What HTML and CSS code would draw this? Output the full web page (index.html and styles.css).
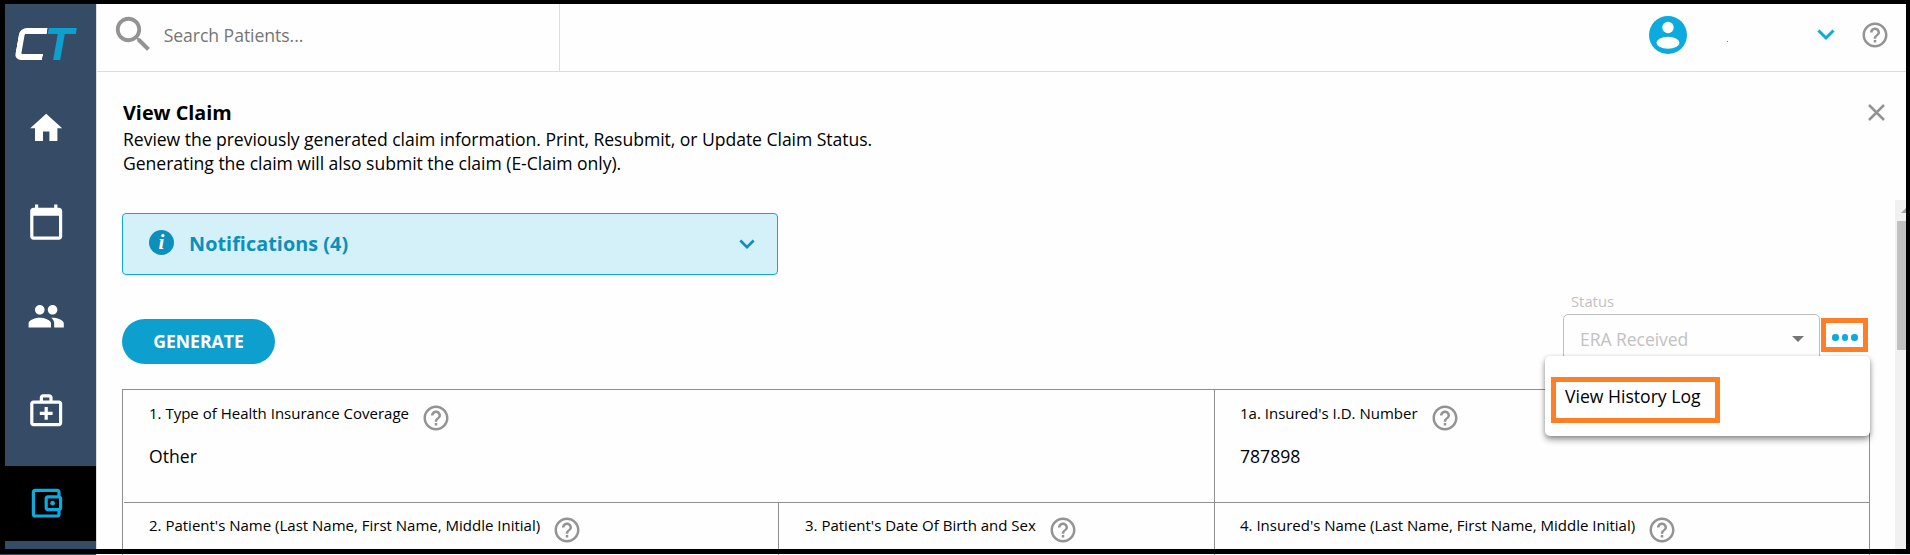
FILE: index.html
```
<!DOCTYPE html>
<html lang="en">
<head>
<meta charset="utf-8">
<title>View Claim</title>
<link rel="stylesheet" href="styles.css">
</head>
<body>
<svg class="defs" width="0" height="0" aria-hidden="true">
  <symbol id="help" viewBox="0 0 24 24"><path d="M11 18h2v-2h-2v2zm1-16C6.48 2 2 6.48 2 12s4.48 10 10 10 10-4.48 10-10S17.52 2 12 2zm0 18c-4.41 0-8-3.59-8-8s3.59-8 8-8 8 3.59 8 8-3.59 8-8 8zm0-14c-2.21 0-4 1.79-4 4h2c0-1.1.9-2 2-2s2 .9 2 2c0 2-3 1.75-3 5h2c0-2.25 3-2.5 3-5 0-2.21-1.79-4-4-4z"/></symbol>
</svg>
<div class="app">
  <nav class="sidebar">
    <div class="logo"><span class="logo-c"></span><span class="logo-t"></span></div>
    <a class="nav-item"><svg viewBox="0 0 24 24"><path d="M10 20v-6h4v6h5v-8h3L12 3 2 12h3v8z"/></svg></a>
    <a class="nav-item"><svg viewBox="0 0 24 24"><path d="M20 3h-1V1h-2v2H7V1H5v2H4c-1.1 0-2 .9-2 2v16c0 1.1.9 2 2 2h16c1.1 0 2-.9 2-2V5c0-1.1-.9-2-2-2zm0 18H4V8h16v13z"/></svg></a>
    <a class="nav-item"><svg viewBox="0 0 24 24"><path d="M16 11c1.66 0 2.99-1.34 2.99-3S17.66 5 16 5c-1.66 0-3 1.34-3 3s1.34 3 3 3zm-8 0c1.66 0 2.99-1.34 2.99-3S9.66 5 8 5C6.34 5 5 6.34 5 8s1.34 3 3 3zm0 2c-2.33 0-7 1.17-7 3.5V19h14v-2.500c0-2.330-4.670-3.500-7-3.500zm8 0c-.29 0-.62.02-.97.05 1.160.840 1.970 1.970 1.970 3.450V19h6v-2.500c0-2.330-4.670-3.500-7-3.500z"/></svg></a>
    <a class="nav-item"><svg viewBox="0 0 24 24"><path fill-rule="evenodd" d="M20 6h-4V4c0-1.100-.9-2-2-2h-4c-1.100 0-2 .9-2 2v2H4c-1.100 0-2 .9-2 2v12c0 1.100.9 2 2 2h16c1.100 0 2-.9 2-2V8c0-1.100-.9-2-2-2zM10 4h4v2h-4V4zm10 16H4V8h16v12z"/><path d="M13 10h-2v3H8v2h3v3h2v-3h3v-2h-3z"/></svg></a>
    <a class="nav-item active"><svg viewBox="0 0 24 24"><path fill-rule="evenodd" d="M21 7.280V5c0-1.100-.9-2-2-2H5c-1.110 0-2 .9-2 2v14c0 1.100.890 2 2 2h14c1.100 0 2-.9 2-2v-2.280c.590-.350 1-.980 1-1.720V9c0-.740-.410-1.370-1-1.720zM20 9v6h-7V9h7zM5 19V5h14v2h-6c-1.100 0-2 .9-2 2v6c0 1.100.9 2 2 2h6v2H5z"/><circle cx="16" cy="12" r="1.500"/></svg></a>
  </nav>
  <main class="main">
    <header class="topbar">
      <div class="search">
        <svg class="search-icon" viewBox="0 0 24 24"><path d="M15.500 14h-.790l-.280-.270C15.410 12.590 16 11.110 16 9.500 16 5.910 13.090 3 9.500 3S3 5.910 3 9.500 5.910 16 9.500 16c1.610 0 3.090-.590 4.230-1.570l.270.280v.790l5 4.990L20.490 19l-4.990-5zm-6 0C7.010 14 5 11.990 5 9.500S7.010 5 9.500 5 14 7.010 14 9.500 11.990 14 9.500 14z"/></svg>
        <span class="search-text">Search Patients...</span>
      </div>
      <div class="account">
        <svg class="avatar" viewBox="0 0 38 38"><circle cx="19" cy="19" r="19"/><circle class="hole" cx="19" cy="11.500" r="5.700"/><ellipse class="hole" cx="19" cy="26.800" rx="11.500" ry="6"/></svg>
        <span class="dot"></span>
        <svg class="chevron blue" viewBox="0 0 18 12"><path d="M1.500 1.500 9 9l7.500-7.500"/></svg>
        <svg class="help"><use href="#help"/></svg>
      </div>
    </header>
    <section class="heading">
      <div>
        <h1>View Claim</h1>
        <p>Review the previously generated claim information. Print, Resubmit, or Update Claim Status.<br>Generating the claim will also submit the claim (E-Claim only).</p>
      </div>
      <svg class="close" viewBox="0 0 17 17"><path d="M1 1l15 15M16 1 1 16"/></svg>
    </section>
    <div class="scroll-area">
      <div class="content">
        <div class="notice">
          <span class="info">i</span>
          <span class="notice-text">Notifications (4)</span>
          <svg class="chevron" viewBox="0 0 18 12"><path d="M1.500 1.500 9 9l7.500-7.500"/></svg>
        </div>
        <div class="actions">
          <button class="generate">GENERATE</button>
          <div class="status">
            <label class="status-label">Status</label>
            <div class="status-row">
              <div class="select"><span>ERA Received</span><i class="caret"></i></div>
              <div class="more"><i></i><i></i><i></i></div>
            </div>
            <div class="menu"><div class="menu-item">View History Log</div></div>
          </div>
        </div>
        <div class="form">
          <div class="row">
            <div class="cell wide"><div class="label"><span>1. Type of Health Insurance Coverage</span><svg class="help"><use href="#help"/></svg></div><div class="value">Other</div></div>
            <div class="cell last"><div class="label"><span>1a. Insured's I.D. Number</span><svg class="help"><use href="#help"/></svg></div><div class="value">787898</div></div>
          </div>
          <div class="row">
            <div class="cell name"><div class="label"><span>2. Patient's Name (Last Name, First Name, Middle Initial)</span><svg class="help"><use href="#help"/></svg></div></div>
            <div class="cell birth"><div class="label"><span>3. Patient's Date Of Birth and Sex</span><svg class="help"><use href="#help"/></svg></div></div>
            <div class="cell last"><div class="label"><span>4. Insured's Name (Last Name, First Name, Middle Initial)</span><svg class="help"><use href="#help"/></svg></div></div>
          </div>
        </div>
      </div>
      <div class="scrollbar"><i class="up"></i><i class="thumb"></i></div>
    </div>
  </main>
  <div class="frame"></div>
</div>
</body>
</html>
```
FILE: styles.css
```
* { box-sizing: border-box; }
body {
  margin: 0;
  overflow: hidden;
  background: #fefefe;
  color: #000;
  font: 17.6px/24px "Open Sans", sans-serif;
}
svg { display: block; flex: none; fill: currentColor; }
.defs { position: absolute; }
.app { position: relative; display: flex; width: 1910px; height: 555px; overflow: hidden; white-space: nowrap; }

/* black outline drawn over the window */
.frame { position: absolute; inset: 0 0 1px 0; border: solid #000; border-width: 4px 4px 5px 5px; }

.sidebar {
  display: flex; flex-direction: column; gap: 19px;
  width: 97px; flex: none;
  background: #364c66; border-right: 1px solid #ddd; color: #fff;
}
.logo { display: flex; height: 71px; padding: 28px 0 0 17px; }
.logo-c { width: 28px; height: 32px; border: solid #fff; border-width: 6px 0 6px 6px; border-radius: 7px 0 0 7px; transform: skewX(-10deg); }
.logo-t {
  width: 28px; height: 32px; margin-left: 1px; transform: skewX(-10deg);
  background: linear-gradient(#0d9fce, #0d9fce) 0 0 / 28px 6px no-repeat, linear-gradient(#0d9fce, #0d9fce) 10px 0 / 7px 32px no-repeat;
}
.nav-item { display: flex; align-items: center; justify-content: center; height: 75px; flex: none; padding: 1px 4px 0 0; }
.nav-item svg { width: 38.4px; height: 38.4px; }
.nav-item.active { background: #000; color: #0daade; padding-top: 0; }

.main { display: flex; flex-direction: column; flex: 1; min-width: 0; }
.topbar { display: flex; justify-content: space-between; height: 72px; flex: none; border-bottom: 1px solid #ddd; }
.search { display: flex; width: 463px; padding: 11px 0 0 13px; border-right: 1px solid #ddd; }
.search-icon { width: 46.7px; height: 46.7px; color: #939393; }
.search-text { margin: 12px 0 0 7px; color: #757575; letter-spacing: -0.05px; }
.account { display: flex; align-items: center; padding: 0 20px 2px 0; color: #0daade; }
.avatar { width: 38px; height: 38px; }
.avatar .hole { fill: #fefefe; }
.dot { width: 1px; height: 1px; margin: 14px 89px 0 40px; background: #0daade; }
.chevron { width: 18px; height: 12px; fill: none; stroke: currentColor; stroke-width: 3; }
.account .chevron { margin-right: 25px; }
.help { width: 30px; height: 30px; color: #939393; }

.heading { display: flex; justify-content: space-between; height: 128px; flex: none; padding: 28px 25px 0 26px; }
h1 { margin: 0 0 2px; font-size: 19.8px; line-height: 25px; font-weight: 700; }
p { margin: 0; line-height: 24.4px; letter-spacing: -0.05px; }
.close { width: 17px; height: 17px; margin-top: 4px; fill: none; stroke: #939393; stroke-width: 2.5; }

.scroll-area { display: flex; flex: 1; min-height: 0; }
.content { width: 1773px; padding: 13px 0 0 25px; }
.scrollbar { flex: 1; margin-left: 25px; padding: 8px 0 0 2px; background: #f1f1f1; }
.scrollbar .up { display: block; margin-left: 4px; width: 0; border: solid transparent; border-width: 0 5px 5px; border-bottom-color: #a3a3a3; }
.scrollbar .thumb { display: block; width: 15px; height: 129px; margin-top: 8px; background: #c1c1c1; }

.notice {
  display: flex; align-items: center; width: 656px; height: 62px; padding: 0 22px 0 26px;
  background: #d4f0f8; border: 1px solid #0daade; border-radius: 4px; color: #0d8fbb;
}
.info {
  width: 25px; height: 25px; margin-bottom: 3px; border-radius: 50%;
  background: #0d8fbb; color: #fff; text-align: center;
  font: italic bold 21px/24px "Liberation Serif", serif;
}
.notice-text { margin: 0 auto 0 15px; font-size: 19.8px; font-weight: 700; letter-spacing: 0.05px; }
.notice .chevron { width: 16px; height: 11px; }

.actions { display: flex; justify-content: space-between; height: 114px; padding-top: 17px; }
.generate {
  width: 153px; height: 45px; margin-top: 27px; padding: 0 0 1px; border: 0; border-radius: 23px;
  background: #0d9fce; color: #fff; font: 700 17.6px/44px "Open Sans", sans-serif;
}
.status { position: relative; width: 307px; }
.status-label { display: block; margin-left: 8px; height: 22px; font-size: 14.8px; line-height: 19px; color: #c2c2c2; }
.status-row { display: flex; gap: 1px; }
.select {
  display: flex; align-items: center; justify-content: space-between; width: 257px; height: 50px; padding: 0 15px 0 16px;
  border: 1px solid #bdbdbd; border-radius: 5px; color: #c2c2c2; letter-spacing: -0.08px;
}
.caret { border: solid transparent; border-width: 6px 6.5px 0; border-top-color: #757575; }
.more { display: flex; align-items: center; justify-content: center; gap: 3px; width: 47px; height: 34px; margin-top: 4px; border: 5px solid #ff7f27; padding: 5px 0 0 1px; }
.more i { width: 6.5px; height: 6.5px; background: #0daade; border-radius: 50%; }
.menu {
  position: absolute; left: -18px; top: 64px; z-index: 1; width: 325px; height: 80px; padding: 21px 6px;
  background: #fff; border-radius: 5px; box-shadow: 0 4px 6px rgba(0,0,0,.35), 0 1px 4px rgba(0,0,0,.2);
}
.menu-item { width: 169px; height: 46px; border: 5px solid #ff7f27; padding: 2px 0 0 9px; }

.form { width: 1748px; border: 1px solid #8f8f8f; }
.row { display: flex; height: 112px; }
.row + .row { border-top: 1px solid #8f8f8f; margin-left: 1px; }
.cell { padding: 12px 0 0 26px; border-right: 1px solid #8f8f8f; }
.wide { width: 1092px; }
.name { width: 655px; padding-left: 25px; }
.birth { width: 436px; }
.last { border-right: 0; padding-left: 25px; }
.label { display: flex; gap: 12px; height: 30px; font-size: 15px; line-height: 22px; }
.label .help { margin-top: 1px; }
.value { margin-top: 12px; }
.row + .row .cell { padding-top: 11px; }
```
